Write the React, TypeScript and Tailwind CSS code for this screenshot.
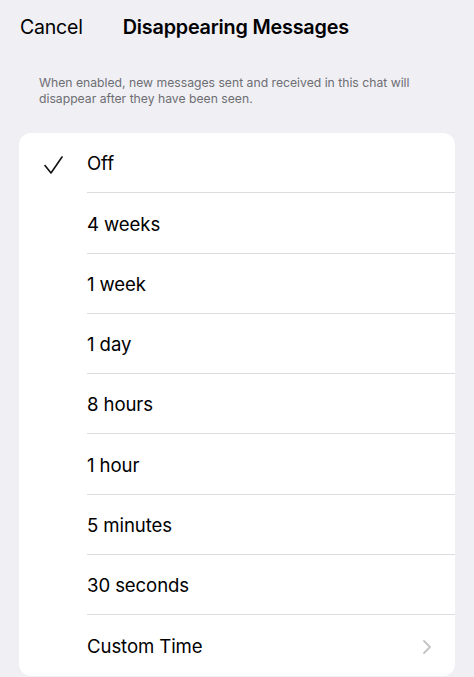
import { ChevronRight } from "lucide-react";

const options = [
  "Off",
  "4 weeks",
  "1 week",
  "1 day",
  "8 hours",
  "1 hour",
  "5 minutes",
  "30 seconds",
];

function Check() {
  return (
    <svg className="h-[18px] w-[19px]" viewBox="0 0 19 18" fill="none" stroke="#111" strokeWidth="1.6" strokeLinecap="round" strokeLinejoin="round" aria-hidden="true">
      <path d="M1 9.5L7 17L18 1" />
    </svg>
  );
}

export default function App() {
  const selected = "Off";

  return (
    <div
      className="flex h-[677px] w-[474px] flex-col overflow-hidden bg-[#efeff4] text-black"
      style={{ fontFamily: "Inter, 'Noto Sans', sans-serif" }}
    >
      <header className="flex h-[55px] items-center px-5">
        <span className="text-[19.5px] tracking-[-0.2px]">Cancel</span>
        <span className="ml-[40px] text-[19.8px] font-semibold tracking-[-0.2px]">
          Disappearing Messages
        </span>
      </header>

      <p className="px-[39px] pt-[20px] text-[12.2px] leading-[16px] text-[#6d6d72]">
        When enabled, new messages sent and received in this chat will
        disappear after they have been seen.
      </p>

      <ul className="mx-[19px] mt-[26px] overflow-hidden rounded-[12px] bg-white">
        {options.map((opt) => (
          <li key={opt} className="flex h-[60.3px] items-center">
            <div className="flex w-[68px] pl-[25px] pt-[3px]">
              {opt === selected && <Check />}
            </div>
            <div className="flex h-full flex-1 items-center border-b border-[#dcdce0] pt-[3px] text-[18.6px] tracking-[-0.1px]">
              {opt}
            </div>
          </li>
        ))}
        <li className="flex h-[60.3px] items-center">
          <div className="w-[68px]" />
          <div className="flex flex-1 items-center justify-between pr-[16px] pt-[3px] text-[18.6px] tracking-[-0.1px]">
            Custom Time
            <ChevronRight className="h-[24px] w-[24px] text-[#c4c4c7]" strokeWidth={1.8} />
          </div>
        </li>
      </ul>
    </div>
  );
}
